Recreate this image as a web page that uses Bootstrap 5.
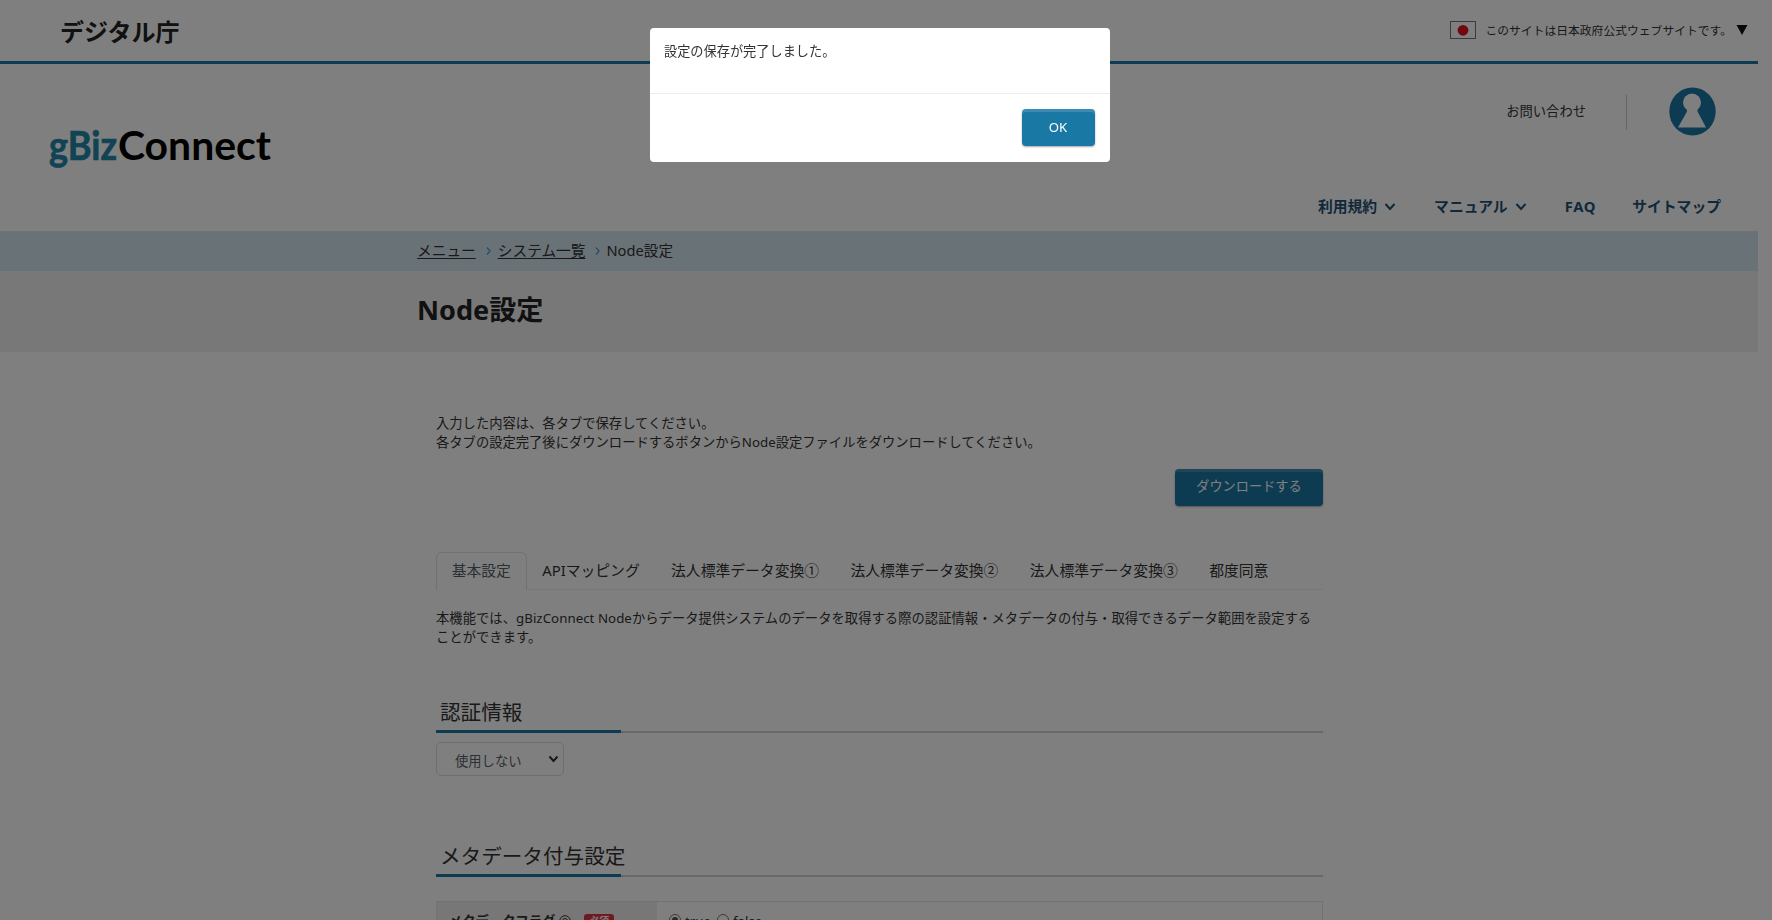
<!DOCTYPE html>
<html lang="ja">
<head>
<meta charset="utf-8">
<meta name="viewport" content="width=device-width, initial-scale=1">
<title>Node設定 | gBizConnect</title>
<link href="https://cdn.jsdelivr.net/npm/bootstrap@5.3.0/dist/css/bootstrap.min.css" rel="stylesheet">
<style>
:root{--brand:#1a78a4}
html,body{height:920px;overflow:hidden}
body{font-family:"Noto Sans","Noto Sans CJK JP",sans-serif;font-size:13.3px;line-height:19.3px;color:#333;background:#fff}
.page-wrap{width:1758px;height:920px;overflow:hidden}
.gov-bar{height:64px;border-bottom:3px solid var(--brand);padding:0 10px 0 60px}
.gov-name{font-family:"Noto Sans CJK JP",sans-serif;font-weight:700;font-size:24px;line-height:36px;color:#222}
.gov-note{font-size:11.8px;line-height:20px;white-space:nowrap;color:#333;padding-bottom:1px}
.site-head{height:167px}
.site-logo{margin:55px 0 0 49px}
.contact{margin:38px 40px 0 0;white-space:nowrap}
.vr-line{width:1px;height:35px;background:#c4c8ca;margin:31px 42px 0 0}
.user-icon{margin:23px 42px 0 0}
.main-nav{font-size:14.8px;line-height:22px;font-weight:700;color:#1f5276;white-space:nowrap;margin:59px 37px 0 0}
.nav-chev{margin:0 38px 0 7px}
.crumbs{height:40px;background:#d2e4ee;padding:0 0 2px 417px;font-size:14.7px;line-height:22px}
.crumbs a{color:#333;text-underline-offset:2px}
.title-band{height:81px;background:#f0f0f0;padding:0 0 3px 417px}
.title-band h1{font-size:27.1px;line-height:38px;font-weight:700;color:#222}
.main-col{width:887px;margin-left:436px;padding-top:62px}
.btn-brand{background:var(--brand);color:#fff;border:0;border-radius:4px;font-size:13.2px;line-height:19px;box-shadow:inset 0 3px 0 rgba(255,255,255,.15),0 1px 2px rgba(0,0,0,.35)}
.nav-tabs{--bs-nav-tabs-border-color:#ecf0f3;font-size:14.8px;line-height:22px}
.nav-tabs .nav-link{padding:6px 14.7px 8px;color:#333;height:38px;white-space:nowrap}
.nav-tabs .nav-link.active{color:#555f68}
.sec-head{font-size:20.6px;line-height:30px;font-weight:400;height:39px;padding:3px 0 0 4px;margin:0;background:linear-gradient(var(--brand),var(--brand)) 0 100%/185px 3px no-repeat,linear-gradient(#d2d2d2,#d2d2d2) 0 100%/100% 2px no-repeat}
.sel-box{width:128px;height:34px;border:1px solid #d8dde1;border-radius:5px;padding:4px 4px 0 18px;color:#58616a}
.meta-grid{border:1px solid #e4e4e4;height:60px}
.meta-key{width:220px;background:#efefef;padding:10px 0 0 12px;font-weight:700}
.req{background:#dc3545;color:#fff;font-size:10px;line-height:14px;border-radius:3px;width:30px;height:15px}
.meta-val{padding:10px 0 0 12px}
.dot{width:12px;height:12px;border:1px solid #777;border-radius:50%;flex:none}
.dot.on{background:#555;background-clip:content-box;padding:2px}
.modal-backdrop{--bs-backdrop-opacity:.5;width:1772px;height:920px}
.modal-dialog{width:460px;max-width:none;margin:28px auto 0 650px}
.modal-content{height:134px;border:0;border-radius:4px}
.modal-body{padding:14px;flex:none;height:65px;font-size:13.2px}
.modal-footer{border-top:1px solid #e9edef;padding:15px;height:69px;align-items:flex-start}
.modal-footer>*{margin:0}
</style>
</head>
<body>
<div class="page-wrap">
  <div class="gov-bar d-flex justify-content-between align-items-center">
    <div class="gov-name">デジタル庁</div>
    <div class="gov-note d-flex align-items-center">
      <svg width="26" height="18" viewBox="0 0 26 18" class="me-2"><rect x=".5" y=".5" width="25" height="17" fill="#fff" stroke="#777"/><circle cx="13" cy="9.3" r="5.4" fill="#e60f1e"/></svg>
      <span style="margin-left:1px">このサイトは日本政府公式ウェブサイトです。</span>
      <svg width="12" height="10" class="ms-1"><path d="M.5 0h11L6 10z" fill="#111"/></svg>
    </div>
  </div>
  <header class="site-head d-flex justify-content-between">
    <svg class="site-logo" width="224" height="60" viewBox="0 0 224 60"><g font-family="Lato, sans-serif" font-weight="700" font-size="41"><text x="0" y="41" fill="#2187a8" stroke="#2187a8" stroke-width=".7" textLength="68" lengthAdjust="spacingAndGlyphs">gBiz</text><text x="69" y="41" fill="#000" textLength="153" lengthAdjust="spacingAndGlyphs">Connect</text></g></svg>
    <div>
      <div class="d-flex justify-content-end">
        <span class="contact">お問い合わせ</span>
        <span class="vr-line"></span>
        <svg class="user-icon" width="47" height="49" viewBox="0 0 47 49"><ellipse cx="23.5" cy="24.5" rx="23.2" ry="24" fill="#1a78a4"/><circle cx="23" cy="15.5" r="9" fill="#fff"/><path d="M18 22V24.500L9 40.500H37L28.500 24.500V22z" fill="#fff"/></svg>
      </div>
      <nav class="main-nav d-flex justify-content-end">
        <span>利用規約</span><svg class="nav-chev" width="12" height="22"><path d="M1.500 9l4.500 5 4.500-5" fill="none" stroke="#1f5276" stroke-width="2"/></svg>
        <span>マニュアル</span><svg class="nav-chev" width="12" height="22"><path d="M1.500 9l4.500 5 4.500-5" fill="none" stroke="#1f5276" stroke-width="2"/></svg>
        <span style="margin-right:36px;letter-spacing:.7px">FAQ</span><span>サイトマップ</span>
      </nav>
    </div>
  </header>
  <nav class="crumbs d-flex align-items-center">
    <a href="#">メニュー</a>
    <svg width="6" height="10" style="margin:2px 6px 0 10px"><path d="M1 1.500l3 3.500-3 3.500" fill="none" stroke="#4f9bd0" stroke-width="1.300"/></svg>
    <a href="#">システム一覧</a>
    <svg width="6" height="10" style="margin:2px 5px 0 10px"><path d="M1 1.500l3 3.500-3 3.500" fill="none" stroke="#4f9bd0" stroke-width="1.300"/></svg>
    <span>Node設定</span>
  </nav>
  <div class="title-band d-flex align-items-center"><h1 class="m-0">Node設定</h1></div>
  <main class="main-col">
    <p class="mb-0 text-nowrap">入力した内容は、各タブで保存してください。<br>各タブの設定完了後にダウンロードするボタンからNode設定ファイルをダウンロードしてください。</p>
    <div class="text-end d-flex justify-content-end" style="padding:16px 0 46px"><button class="btn btn-brand" style="width:148px;height:37px;padding:0 0 2px">ダウンロードする</button></div>
    <ul class="nav nav-tabs flex-nowrap">
      <li class="nav-item"><a class="nav-link active" href="#">基本設定</a></li>
      <li class="nav-item"><a class="nav-link" href="#">APIマッピング</a></li>
      <li class="nav-item"><a class="nav-link" href="#">法人標準データ変換①</a></li>
      <li class="nav-item"><a class="nav-link" href="#">法人標準データ変換②</a></li>
      <li class="nav-item"><a class="nav-link" href="#">法人標準データ変換③</a></li>
      <li class="nav-item"><a class="nav-link" href="#">都度同意</a></li>
    </ul>
    <p class="text-nowrap" style="margin:19px 0 47px;letter-spacing:.035px">本機能では、gBizConnect Nodeからデータ提供システムのデータを取得する際の認証情報・メタデータの付与・取得できるデータ範囲を設定する<br>ことができます。</p>
    <h2 class="sec-head">認証情報</h2>
    <div class="sel-box d-flex justify-content-between align-items-center" style="margin:9px 0 62px"><span>使用しない</span><svg width="11" height="8" style="margin-top:-5px"><path d="M1.500 1.500l4 4.500 4-4.500" fill="none" stroke="#333" stroke-width="2"/></svg></div>
    <h2 class="sec-head">メタデータ付与設定</h2>
    <div class="meta-grid d-flex" style="margin-top:24px">
      <div class="meta-key d-flex"><span>メタデータフラグ</span>
        <svg width="12" height="12" style="margin:3px 13px 0 4px"><circle cx="6" cy="6" r="5.300" fill="none" stroke="#333"/><circle cx="6" cy="6" r="2.500" fill="none" stroke="#333"/></svg>
        <span class="req text-center" style="margin-top:2px">必須</span></div>
      <div class="meta-val d-flex"><span class="dot on" style="margin:2px 4px 0 0"></span><span>true</span><span class="dot" style="margin:2px 4px 0 6px"></span><span>false</span></div>
    </div>
  </main>
</div>
<div class="modal-backdrop show"></div>
<div class="modal d-block" tabindex="-1" style="overflow:hidden">
  <div class="modal-dialog">
    <div class="modal-content">
      <div class="modal-body">設定の保存が完了しました。</div>
      <div class="modal-footer"><button class="btn btn-brand" style="width:73px;height:37px;padding:0 1px 1px 0">OK</button></div>
    </div>
  </div>
</div>
<script src="https://cdn.jsdelivr.net/npm/bootstrap@5.3.0/dist/js/bootstrap.bundle.min.js"></script>
</body>
</html>
